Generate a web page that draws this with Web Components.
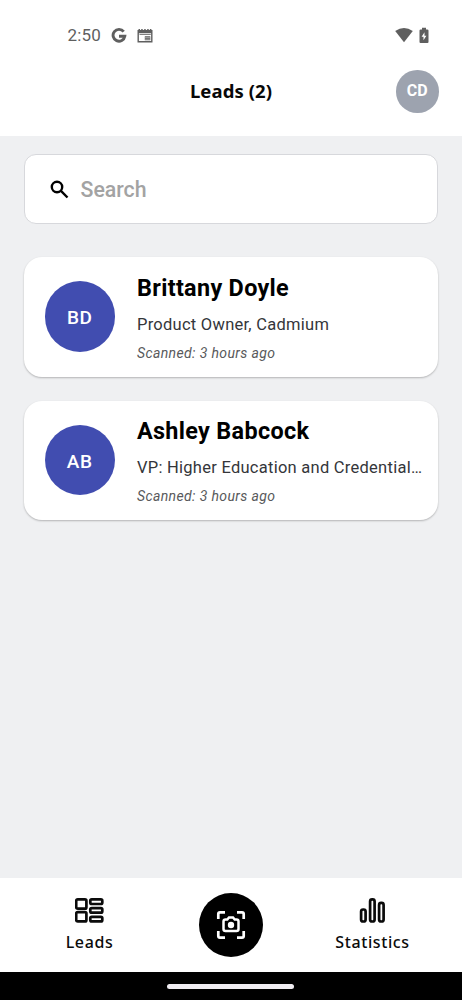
<!DOCTYPE html>
<html lang="en">
<head>
<meta charset="utf-8">
<title>Leads</title>
<style>
html,body{margin:0;height:100%;background:#eff0f2}
</style>
</head>
<body>
<leads-app></leads-app>
<script>
const define = (name, html) => {
  const t = document.createElement('template');
  t.innerHTML = html;
  customElements.define(name, class extends HTMLElement {
    constructor() {
      super();
      this.attachShadow({ mode: 'open' }).append(t.content.cloneNode(true));
    }
  });
};

define('status-bar', `<style>
:host{display:flex;height:70px;box-sizing:border-box;padding:27px 32.500px 0 67.500px;align-items:flex-start;color:#5f5f5f;font:400 17px/17px Roboto,sans-serif}
.time{width:43.500px;letter-spacing:.15px}
svg{display:block;fill:currentColor}
.space{flex:1}
</style>
<span class="time">2:50</span>
<svg width="16" height="17" viewBox="0 0 16 17"><path d="M12.700 4.700A5.900 5.900 0 1 0 13.800 9.200H8" fill="none" stroke="currentColor" stroke-width="2.900"/></svg>
<svg style="margin-left:9.500px" width="17" height="17" viewBox="0.500 0 17 17"><path fill-rule="evenodd" d="M1 3h1V2h1.500v1h1.200V2h1.500v1h1.500V2h1.500v1h1.500V2h1.500v1h1.200V2h1.500v1H16V15.500H1zM2.400 6.300v7.800h12.200V6.300zM8.300 9.300h5.500v4H8.300z"/><path d="M3 7.500h11.300" stroke="currentColor" stroke-width=".8"/><path d="M8.300 10.600h5.600M8.300 12.200h5.600" stroke="#ccc" stroke-width=".6"/></svg>
<span class="space"></span>
<svg width="18" height="17" viewBox="0 0 18 17"><path d="M.2 4Q9-2.200 17.800 4L9 15.200z"/></svg>
<svg style="margin-left:6px" width="11" height="17" viewBox="0 0 11 17"><path fill-rule="evenodd" d="M3 .8h4v1.600h1.300q1.200 0 1.200 1.200V15q0 1-1 1h-7q-1 0-1-1V3.600q0-1.200 1.200-1.200H3zM5.500 5.300L2.600 9.700h1.900v3.500L7.400 8.700H5.500z"/></svg>`);

define('initials-badge', `<style>
:host{display:flex;flex:none;align-items:center;justify-content:center;border-radius:50%;color:#fff;font-family:Roboto,sans-serif}
</style><slot></slot>`);

define('app-header', `<style>
:host{display:grid;grid-template-columns:42px 1fr 42px;align-items:start;height:66px;padding:0 24px;text-align:center}
h1{grid-column:2;margin:8px 0 0;font:700 18.500px/26px "Noto Sans",sans-serif;color:#080808;letter-spacing:.08px}
initials-badge{box-sizing:border-box;width:42.500px;height:42.500px;padding-bottom:1.500px;background:#9da3af;font-size:16px;font-weight:700}
</style><h1><slot></slot></h1><initials-badge>CD</initials-badge>`);

define('search-box', `<style>
:host{display:flex;align-items:center;box-sizing:border-box;height:69.500px;border:1px solid #d7d8dc;border-radius:12px;background:#fff;padding:1.500px 0 0 25px;color:#a3a3a3;font:500 21.300px/26px Roboto,sans-serif}
svg{margin-right:12px}
</style><svg width="19" height="19" viewBox="0 0 19 19" fill="none" stroke="#000" stroke-width="2.400"><circle cx="7" cy="7" r="5.200"/><path d="M10.700 10.700L17.500 17.500"/></svg><span><slot></slot></span>`);

define('lead-card', `<style>
:host{display:flex;box-sizing:border-box;height:119.500px;border-radius:18px;background:#fff;box-shadow:0 1px 2px rgba(0,0,0,.25);padding:0 14px 0 21px;align-items:center;font-family:Roboto,sans-serif}
initials-badge{box-sizing:border-box;width:70.500px;height:70.500px;padding-top:2.500px;margin-bottom:.5px;background:#414db0;font-size:19px;font-weight:500;letter-spacing:.6px}
.info{flex:1;min-width:0;margin-left:22px;padding-top:2px;white-space:nowrap}
.name{font-size:23.400px;font-weight:700;line-height:30px;color:#000;letter-spacing:.32px}
.role{margin-top:10px;font-size:16.500px;line-height:24px;color:#34363a;letter-spacing:.26px}
.time{margin-top:6px;font-size:14px;font-style:italic;line-height:20px;color:#58595b;letter-spacing:.38px}
</style><initials-badge><slot name="initials"></slot></initials-badge>
<div class="info"><div class="name"><slot name="name"></slot></div><div class="role"><slot name="role"></slot></div><div class="time"><slot name="time"></slot></div></div>`);

define('nav-item', `<style>
:host{display:flex;flex-direction:column;align-items:center;font:500 16px/24px "Noto Sans",sans-serif;color:#0b0b0b;letter-spacing:.6px}
::slotted(svg){display:block;margin-bottom:6px}
</style><slot name="icon"></slot><span><slot></slot></span>`);

define('bottom-nav', `<style>
:host{display:grid;grid-template-columns:141px 1fr 141px;box-sizing:border-box;height:94px;background:#fff;padding:19px 19px 0 19px}
.scan{justify-self:center;margin:-4px 0 0 -1px;width:64px;height:64px;border-radius:50%;background:#000;display:flex;align-items:center;justify-content:center}
svg{fill:none;stroke:#0b0b0b}
</style>
<nav-item><svg slot="icon" width="30" height="27" viewBox="0.700 0.500 30 27" stroke-width="2.700"><rect x="1.900" y="2.900" width="10.200" height="9.300" rx="1.500"/><rect x="1.900" y="15.600" width="10.200" height="9.300" rx="1.500"/><rect x="16" y="2.900" width="12" height="4.600" rx="1.500"/><rect x="16" y="11.600" width="12" height="4.600" rx="1.500"/><rect x="16" y="20.300" width="12" height="4.600" rx="1.500"/></svg>Leads</nav-item>
<div class="scan"><svg width="30" height="30" viewBox="0 0 30 30" style="stroke:#fff" stroke-width="2.700"><path d="M2.300 9V4q0-1.700 1.700-1.700h5M21 2.300h5q1.700 0 1.700 1.700v5M27.700 21v5q0 1.700-1.700 1.700h-5M9 27.700H4q-1.700 0-1.700-1.700v-5"/><path d="M7.500 11.500q0-2 2-2h1.800l1.700-2h4l1.700 2h1.800q2 0 2 2v7.500q0 2-2 2h-11q-2 0-2-2z" stroke-width="2.500"/><circle cx="15" cy="15" r="3.200" fill="#fff" stroke="none"/></svg></div>
<nav-item><svg slot="icon" width="28" height="27" viewBox="0.400 0.500 28 27" stroke-width="2.700"><rect x="2.500" y="13" width="4.500" height="12" rx="2"/><rect x="11.500" y="2.900" width="4.500" height="22.100" rx="2"/><rect x="20.500" y="6.400" width="4.500" height="18.600" rx="2"/></svg>Statistics</nav-item>`);

define('gesture-bar', `<style>
:host{display:flex;height:28px;background:#000;justify-content:center;align-items:center}
i{width:127px;height:5px;margin-right:1px;border-radius:3px;background:#f0edf2}
</style><i></i>`);

define('leads-app', `<style>
:host{display:flex;flex-direction:column;width:462px;height:1000px;background:#eff0f2;overflow:hidden}
header{background:#fff}
main{flex:1;padding:18px 24px 0 23.500px}
lead-card{margin-top:24px}
search-box + lead-card{margin-top:33.500px}
</style>
<header><status-bar></status-bar><app-header>Leads (2)</app-header></header>
<main><search-box>Search</search-box>
<lead-card><span slot="initials">BD</span><span slot="name">Brittany Doyle</span><span slot="role">Product Owner, Cadmium</span><span slot="time">Scanned: 3 hours ago</span></lead-card>
<lead-card><span slot="initials">AB</span><span slot="name">Ashley Babcock</span><span slot="role">VP: Higher Education and Credential…</span><span slot="time">Scanned: 3 hours ago</span></lead-card></main>
<bottom-nav></bottom-nav><gesture-bar></gesture-bar>`);
</script>
</body>
</html>
